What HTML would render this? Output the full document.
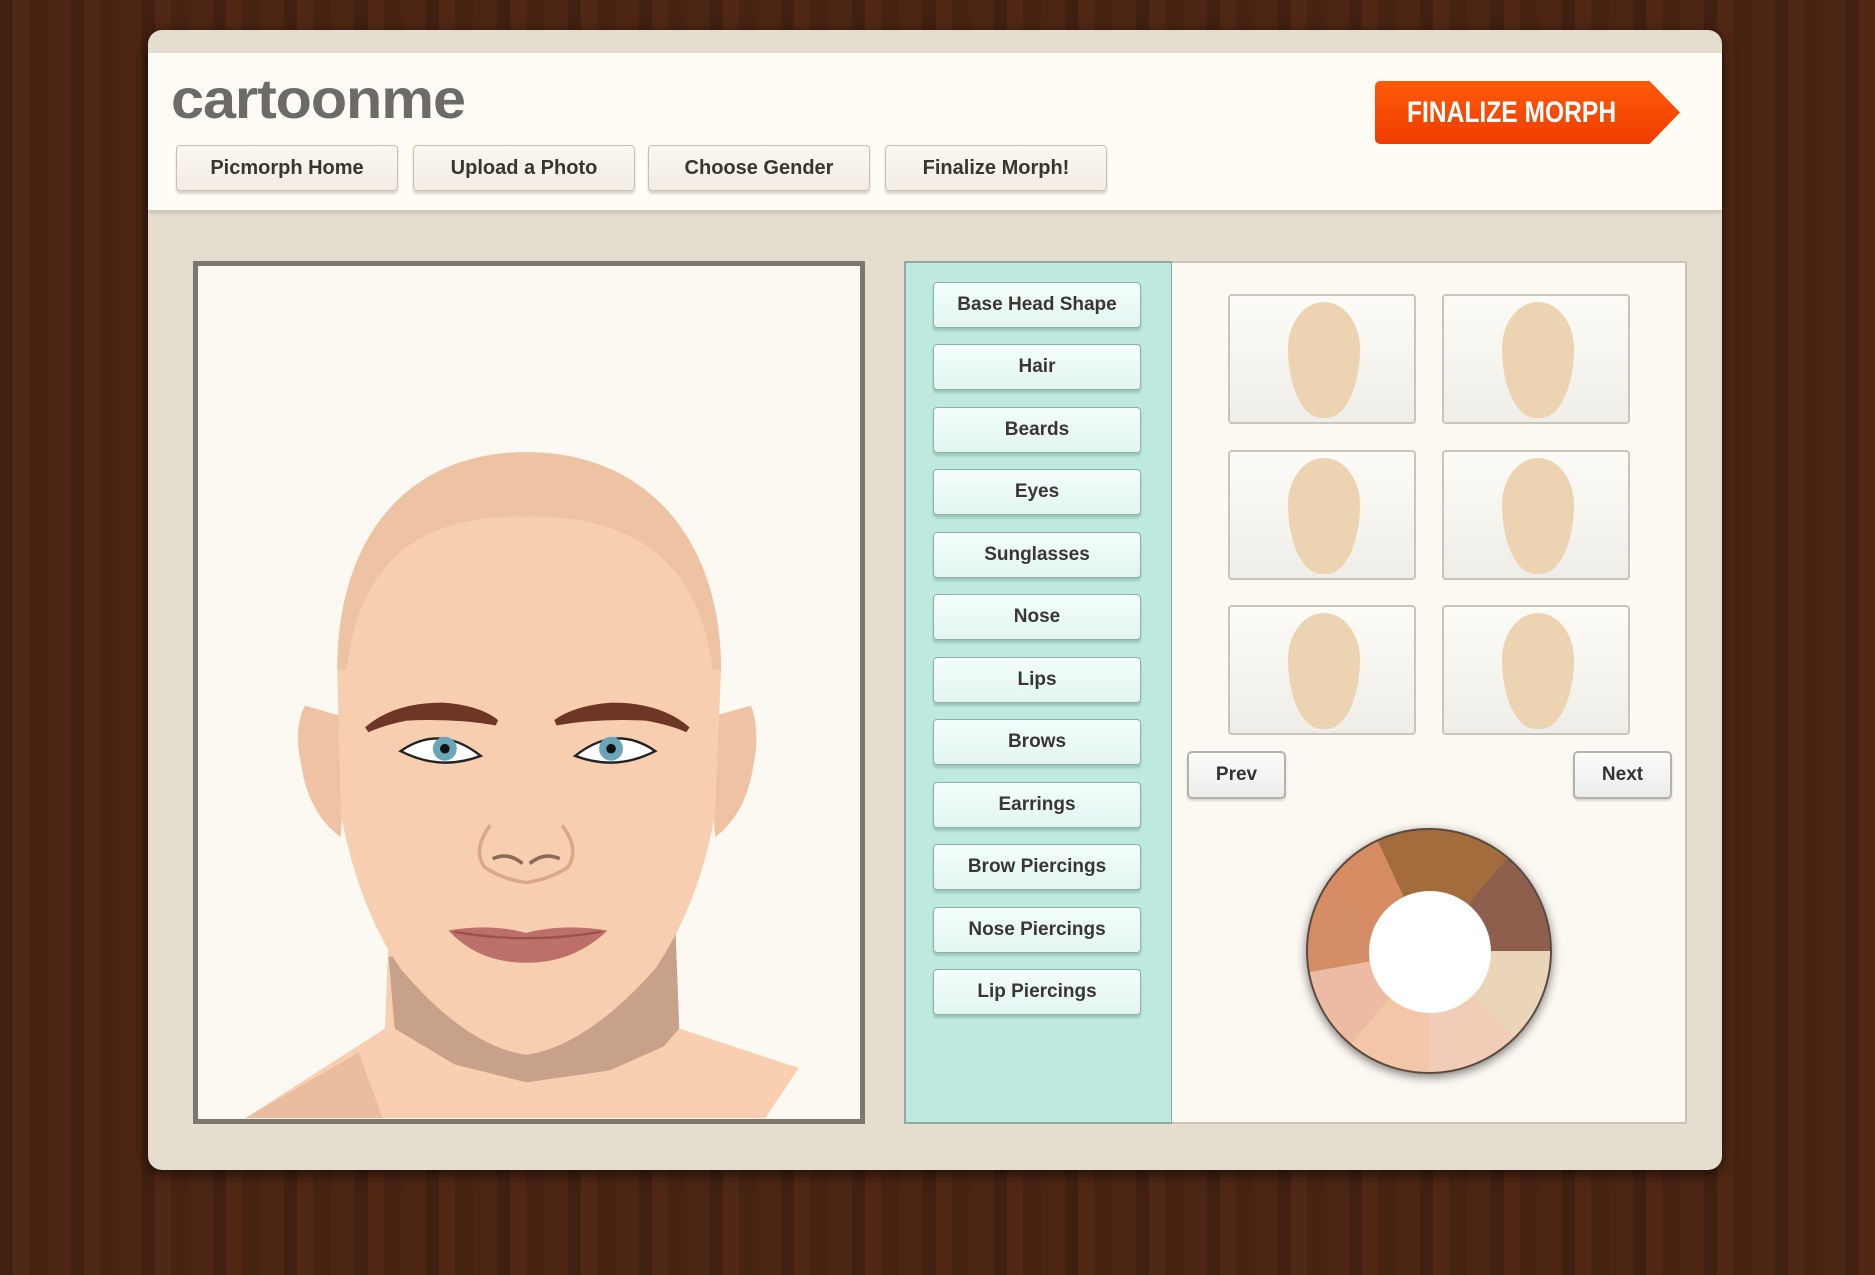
<!DOCTYPE html>
<html><head><meta charset="utf-8"><style>
*{margin:0;padding:0;box-sizing:border-box}
body{width:1875px;height:1275px;overflow:hidden;position:relative;font-family:"Liberation Sans",sans-serif;
background:#4a2413;background-image:repeating-linear-gradient(90deg,rgba(0,0,0,.12) 0 13px,rgba(140,70,35,.10) 13px 29px,rgba(0,0,0,.04) 29px 47px,rgba(100,45,18,.12) 47px 71px);}
.abs{position:absolute}
.panel{left:148px;top:30px;width:1574px;height:1140px;background:#e5ddd0;border-radius:14px;box-shadow:0 4px 14px rgba(0,0,0,.6)}
.head{left:148px;top:53px;width:1574px;height:157px;background:#fefcf5;box-shadow:0 3px 4px rgba(0,0,0,.12)}
.logo{left:171px;top:66px;font-family:"Liberation Sans",sans-serif;font-weight:bold;font-size:56px;color:#6d6b68;letter-spacing:-1px;transform:scaleX(1.06);transform-origin:left}
.nav{top:145px;height:46px;width:222px;background:linear-gradient(#fbf7f0,#f2ece3);border:1px solid #c9bfb2;border-radius:4px;box-shadow:0 3px 2px rgba(0,0,0,.15);font-size:20px;font-weight:bold;color:#3b3530;text-align:center;line-height:44px}
.fin{left:1375px;top:81px;width:305px;height:63px;background:linear-gradient(#ff5a0a,#f03d00);clip-path:polygon(0 0,90% 0,100% 50%,90% 100%,0 100%);border-radius:5px;color:#fff;font-family:"Liberation Sans",sans-serif;font-weight:bold;font-size:30px;line-height:63px;padding-left:32px}
.canvas{left:193px;top:261px;width:672px;height:863px;background:#fcf9f2;border:5px solid #7d786f}
.menu{left:904px;top:261px;width:268px;height:863px;background:#bde9de;border:2px solid #8eaaa2;border-right:1px solid #8aa}
.right{left:1172px;top:261px;width:515px;height:863px;background:#fcf9f2;border:2px solid #c9c3b8;border-left:none}
.mb{left:933px;width:208px;height:46px;background:linear-gradient(#f3fefb,#e3f5f1);border:1px solid #8fb0a8;border-radius:4px;box-shadow:0 3px 2px rgba(60,100,90,.25);font-size:19px;font-weight:bold;color:#3a3733;text-align:center;line-height:44px}
.th{width:188px;height:130px;background:linear-gradient(#fdfbf6,#efede8);border:2px solid #cbc4b8;border-radius:4px}
.th div{position:absolute;left:58px;top:6px;width:72px;height:116px;background:#ecd4b2;border-radius:50% 50% 46% 46%/40% 40% 60% 60%}
.pb{top:751px;width:99px;height:48px;background:linear-gradient(#fbfbfa,#ececea);border:2px solid #b5b2ab;border-radius:5px;font-size:19px;font-weight:bold;color:#333;text-align:center;line-height:44px;box-shadow:0 2px 2px rgba(0,0,0,.15)}
.wheel{left:1306px;top:828px;width:246px;height:246px;border-radius:50%;border:2px solid #5a4a40;box-shadow:0 3px 10px rgba(0,0,0,.5);
background:conic-gradient(from -25deg,#a36c3c 0 65deg,#8e5f4c 65deg 115deg,#ead5b9 115deg 160deg,#f1cdb8 160deg 205deg,#f4c6a8 205deg 245deg,#edbaa3 245deg 285deg,#d48d65 285deg 325deg,#d58c62 325deg 360deg)}
.hole{left:1369px;top:891px;width:122px;height:122px;border-radius:50%;background:#fff}
</style></head><body>
<div class="abs panel"></div>
<div class="abs head"></div>
<div class="abs logo">cartoonme</div>
<div class="abs nav" style="left:176px">Picmorph Home</div>
<div class="abs nav" style="left:413px">Upload a Photo</div>
<div class="abs nav" style="left:648px">Choose Gender</div>
<div class="abs nav" style="left:885px">Finalize Morph!</div>
<div class="abs fin"><span style="display:inline-block;transform:scaleX(.82);transform-origin:left">FINALIZE MORPH</span></div>
<div class="abs canvas"></div>
<div class="abs menu"></div>
<div class="abs right"></div>
<div class="abs mb" style="top:282px">Base Head Shape</div>
<div class="abs mb" style="top:344px">Hair</div>
<div class="abs mb" style="top:407px">Beards</div>
<div class="abs mb" style="top:469px">Eyes</div>
<div class="abs mb" style="top:532px">Sunglasses</div>
<div class="abs mb" style="top:594px">Nose</div>
<div class="abs mb" style="top:657px">Lips</div>
<div class="abs mb" style="top:719px">Brows</div>
<div class="abs mb" style="top:782px">Earrings</div>
<div class="abs mb" style="top:844px">Brow Piercings</div>
<div class="abs mb" style="top:907px">Nose Piercings</div>
<div class="abs mb" style="top:969px">Lip Piercings</div>
<div class="abs th" style="left:1228px;top:294px"><div></div></div>
<div class="abs th" style="left:1442px;top:294px"><div></div></div>
<div class="abs th" style="left:1228px;top:450px"><div></div></div>
<div class="abs th" style="left:1442px;top:450px"><div></div></div>
<div class="abs th" style="left:1228px;top:605px"><div></div></div>
<div class="abs th" style="left:1442px;top:605px"><div></div></div>
<div class="abs pb" style="left:1187px">Prev</div>
<div class="abs pb" style="left:1573px">Next</div>
<div class="abs wheel"></div>
<div class="abs hole"></div>
<svg class="abs" style="left:0;top:0" width="1875" height="1275" viewBox="0 0 1568 1066">
<defs><clipPath id="c"><rect x="166" y="223" width="552" height="712"/></clipPath></defs>
<g clip-path="url(#c)">
<path d="M205 935 L322 860 L325 780 L565 780 L568 860 L668 893 L640 935Z" fill="#f8cfb0"/>
<path d="M205 935 L300 880 L320 935Z" fill="#e9bd9e"/>
<path d="M325 800 L330 860 L380 890 L440 905 L510 895 L555 875 L568 860 L565 780Z" fill="#c7a189"/>
<path d="M255 590 Q245 610 252 640 Q258 680 285 700 L290 600Z" fill="#efc2a3"/>
<path d="M628 590 Q636 610 630 640 Q624 680 598 700 L592 600Z" fill="#efc2a3"/>
<path d="M440 378 C340 378 282 450 282 560 L285 680 Q300 760 335 810 Q390 875 440 882 Q490 875 548 810 Q585 755 598 680 L603 560 C603 450 540 378 440 378Z" fill="#f7ceaf"/>
<path d="M440 378 C340 378 282 450 282 560 L290 560 C300 470 350 430 440 432 C530 430 585 470 596 560 L603 560 C603 450 540 378 440 378Z" fill="#eec3a3"/>
<path d="M307 610 Q330 590 370 590 Q400 592 415 604 Q380 598 340 600 Q320 604 307 610Z" fill="#6e3624" stroke="#6e3624" stroke-width="5"/>
<path d="M575 610 Q552 590 512 590 Q482 592 465 604 Q500 598 540 600 Q562 604 575 610Z" fill="#6e3624" stroke="#6e3624" stroke-width="5"/>
<path d="M335 628 Q368 605 402 632 Q368 645 335 628Z" fill="#fff" stroke="#222" stroke-width="2"/>
<circle cx="372" cy="626" r="10" fill="#6aa5b8"/><circle cx="372" cy="626" r="4" fill="#111"/>
<path d="M548 628 Q515 605 481 632 Q515 645 548 628Z" fill="#fff" stroke="#222" stroke-width="2"/>
<circle cx="511" cy="626" r="10" fill="#6aa5b8"/><circle cx="511" cy="626" r="4" fill="#111"/>
<path d="M410 690 Q395 710 405 725 Q420 735 440 738 Q460 735 475 725 Q485 710 470 690" fill="none" stroke="#d9a88a" stroke-width="3"/>
<path d="M412 718 Q425 712 437 722 M468 718 Q455 712 443 722" stroke="#8c6a58" stroke-width="3" fill="none"/>
<path d="M375 778 Q410 772 440 780 Q470 772 508 778 Q480 805 440 805 Q400 805 375 778Z" fill="#bd6f69"/>
<path d="M380 779 Q440 790 503 779" stroke="#9c5050" stroke-width="2" fill="none"/>
</g>
</svg>
</body></html>
